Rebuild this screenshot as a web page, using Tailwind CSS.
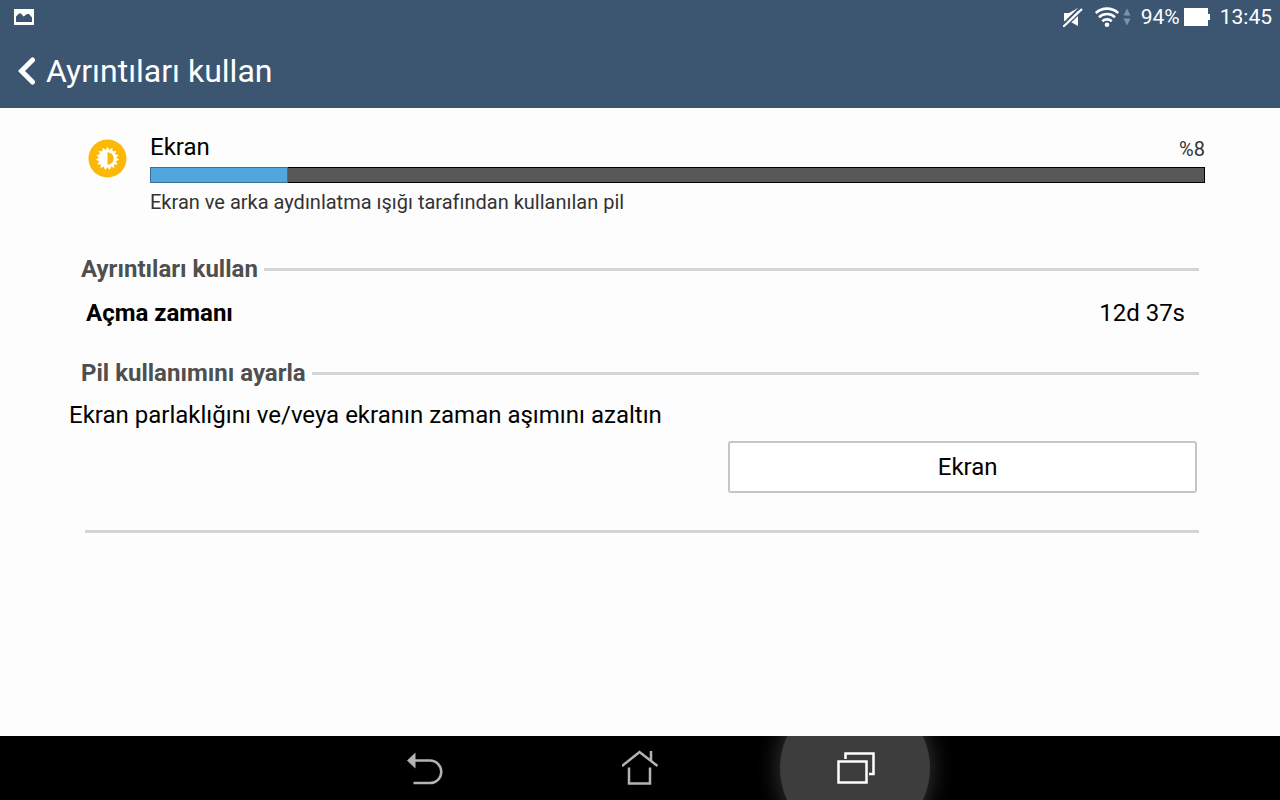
<!DOCTYPE html>
<html lang="tr">

<head>
    <meta charset="UTF-8">
    <meta name="viewport" content="width=device-width, initial-scale=1.0">
    <title>Ayrıntıları kullan</title>
    <script src="https://cdn.jsdelivr.net/npm/@tailwindcss/browser@4"></script>
</head>

<body class="flex flex-col min-h-screen bg-[#fdfdfd] text-black font-['Roboto',sans-serif]">

    <!-- Header -->
    <header class="bg-[#3c5672] text-white">

        <!-- Status bar -->
        <div class="flex items-center justify-between h-[34px] pl-3.5 pr-2 text-[21px] leading-8">
            <svg class="w-5 h-4" viewBox="0 0 20 16">
                <rect width="20" height="16" fill="#fff" />
                <path d="M2 13V7.500L5 4.500h2L9.500 7.500 13 5h2l3 3.500V13z" fill="#3c5672" />
            </svg>
            <div class="flex items-center">
                <svg class="w-5 h-5 mr-3" viewBox="0 0 20 20" fill="#fff">
                    <path d="M1 6h5l9-5v18l-9-5H1z" />
                    <path d="M-1 18.500L18 -.500" stroke="#3c5672" stroke-width="2" />
                    <path d="M0 22L22 1" stroke="#3c5672" stroke-width="2" />
                    <path d="M0 20L19 2" stroke="#fff" stroke-width="2.200" />
                </svg>
                <svg class="w-6 h-5" viewBox="0 0 24 20" fill="none" stroke="#fff" stroke-width="2.600">
                    <path d="M.800 6a16.500 16.500 0 0 1 22.400 0" />
                    <path d="M4 10.200a11.800 11.800 0 0 1 16 0" />
                    <path d="M7.300 14.200a7 7 0 0 1 9.400 0" />
                    <circle cx="12" cy="17.700" r="2.300" fill="#fff" stroke="none" />
                </svg>
                <svg class="w-2 h-5 ml-1 mr-2.5" viewBox="0 0 8 20" fill="#8192a5">
                    <path d="M.500 8.500L4 1.500l3.500 7zM.500 11.500l3.500 7 3.500-7z" />
                </svg>
                <span>94%</span>
                <svg class="w-[26px] h-[18px] ml-1 mr-2.5" viewBox="0 0 26 18" fill="#fff">
                    <path d="M0 0h24v6h2v6h-2v6H0z" />
                </svg>
                <span>13:45</span>
            </div>
        </div>

        <!-- Title -->
        <div class="flex items-center h-[74px] pl-[18px]">
            <a href="#" class="flex items-center gap-2.5">
                <svg class="w-[18px] h-7" viewBox="0 0 18 28" fill="none" stroke="#fff" stroke-width="5"
                    stroke-linecap="round" stroke-linejoin="miter">
                    <path d="M14.500 3L3.500 14l11 11" />
                </svg>
                <h1 class="text-[32px] leading-10">Ayrıntıları kullan</h1>
            </a>
        </div>
    </header>

    <!-- Body -->
    <main class="flex-1">

        <!-- Usage -->
        <section class="flex gap-[23px] pt-6 pl-[88px] pr-[75px]">
            <svg class="w-[39px] h-[39px] mt-[7px] shrink-0" viewBox="0 0 39 39">
                <circle cx="19.500" cy="19.500" r="19" fill="#fbb905" />
                <g fill="#fff">
                    <path d="M19.500 7.800l10.100 17.600H9.400z" />
                    <path d="M19.500 7.800l10.100 17.600H9.400z" transform="rotate(24 19.500 19.500)" />
                    <path d="M19.500 7.800l10.100 17.600H9.400z" transform="rotate(48 19.500 19.500)" />
                    <path d="M19.500 7.800l10.100 17.600H9.400z" transform="rotate(72 19.500 19.500)" />
                    <path d="M19.500 7.800l10.100 17.600H9.400z" transform="rotate(96 19.500 19.500)" />
                </g>
                <path d="M19.500 13.300a6.200 6.200 0 0 1 0 12.400z" fill="#fbb905" />
            </svg>
            <div class="flex-1">
                <div class="flex justify-between">
                    <h2 id="usage" class="text-2xl leading-[30px]">Ekran</h2>
                    <span class="text-xl leading-[34px] text-[#333]">%8</span>
                </div>
                <div role="progressbar" aria-labelledby="usage" aria-valuenow="8"
                    class="flex h-4 mt-px bg-[#585858] border border-black">
                    <div class="-m-px bg-[#51a6dd] border border-[#3d6f97]" style="width: 13.1%"></div>
                </div>
                <p class="mt-1 text-xl leading-[30px] text-[#333]">Ekran ve arka aydınlatma ışığı tarafından
                    kullanılan pil</p>
            </div>
        </section>

        <!-- Details -->
        <section class="pt-[37px] pl-[81px] pr-[81px]">
            <div class="flex items-center gap-1.5">
                <h2 class="text-2xl leading-[30px] font-bold text-[#4f4f4f]">Ayrıntıları kullan</h2>
                <div class="flex-1 h-[3px] bg-[#d3d5d5]"></div>
            </div>
            <dl class="flex justify-between mt-3.5 pl-[5px] pr-3.5 text-2xl leading-[30px]">
                <dt class="font-bold">Açma zamanı</dt>
                <dd>12d 37s</dd>
            </dl>
        </section>

        <!-- Adjust -->
        <section class="pt-[30px] pl-[81px] pr-[81px]">
            <div class="flex items-center gap-1.5">
                <h2 class="text-2xl leading-[30px] font-bold text-[#4f4f4f]">Pil kullanımını ayarla</h2>
                <div class="flex-1 h-[3px] bg-[#d3d5d5]"></div>
            </div>
            <p class="-ml-3 mt-3 text-2xl leading-[30px]">Ekran parlaklığını ve/veya ekranın zaman aşımını azaltın</p>
            <div class="flex justify-end mt-[11px] pr-0.5">
                <button
                    class="w-[42%] h-[52px] pl-2.5 bg-white border-2 border-[#c6c6c6] rounded-[3px] text-2xl">Ekran</button>
            </div>
            <hr class="h-[3px] mt-[37px] ml-1 border-0 bg-[#d3d5d5]">
        </section>
    </main>

    <!-- Navigation -->
    <nav class="flex justify-center h-16 bg-black overflow-hidden">
        <button aria-label="Geri" class="flex items-center justify-center w-[215px]">
            <svg class="w-9 h-9" viewBox="0 0 36 36" fill="none" stroke="#b4b4b4" stroke-width="2.500">
                <path d="M7 10.500h16a11.300 11.300 0 0 1 0 22.600H6.500" />
                <path d="M0 10.500l8.500-8v16z" fill="#b4b4b4" stroke="none" />
            </svg>
        </button>
        <button aria-label="Ana ekran" class="flex items-center justify-center w-[215px]">
            <svg class="w-9 h-9" viewBox="0 0 36 36" fill="none" stroke="#b4b4b4" stroke-width="2.500">
                <path d="M0 16L17.500 2l18 14" />
                <path d="M29 11V1" />
                <path d="M7 17.500v16h21v-16" />
            </svg>
        </button>
        <button aria-label="Son uygulamalar" class="flex items-center justify-center w-[215px]">
            <span
                class="flex items-center justify-center w-[150px] h-[150px] shrink-0 rounded-full bg-[#3d3d3d] shadow-[0_0_24px_#3d3d3d]">
                <svg class="w-10 h-8" viewBox="0 0 40 32" fill="none" stroke="#fff" stroke-width="2.500">
                    <rect x="3.500" y="9.500" width="28" height="21" />
                    <path d="M10.500 7V1.500h28V22H34" />
                </svg>
            </span>
        </button>
    </nav>
</body>

</html>
